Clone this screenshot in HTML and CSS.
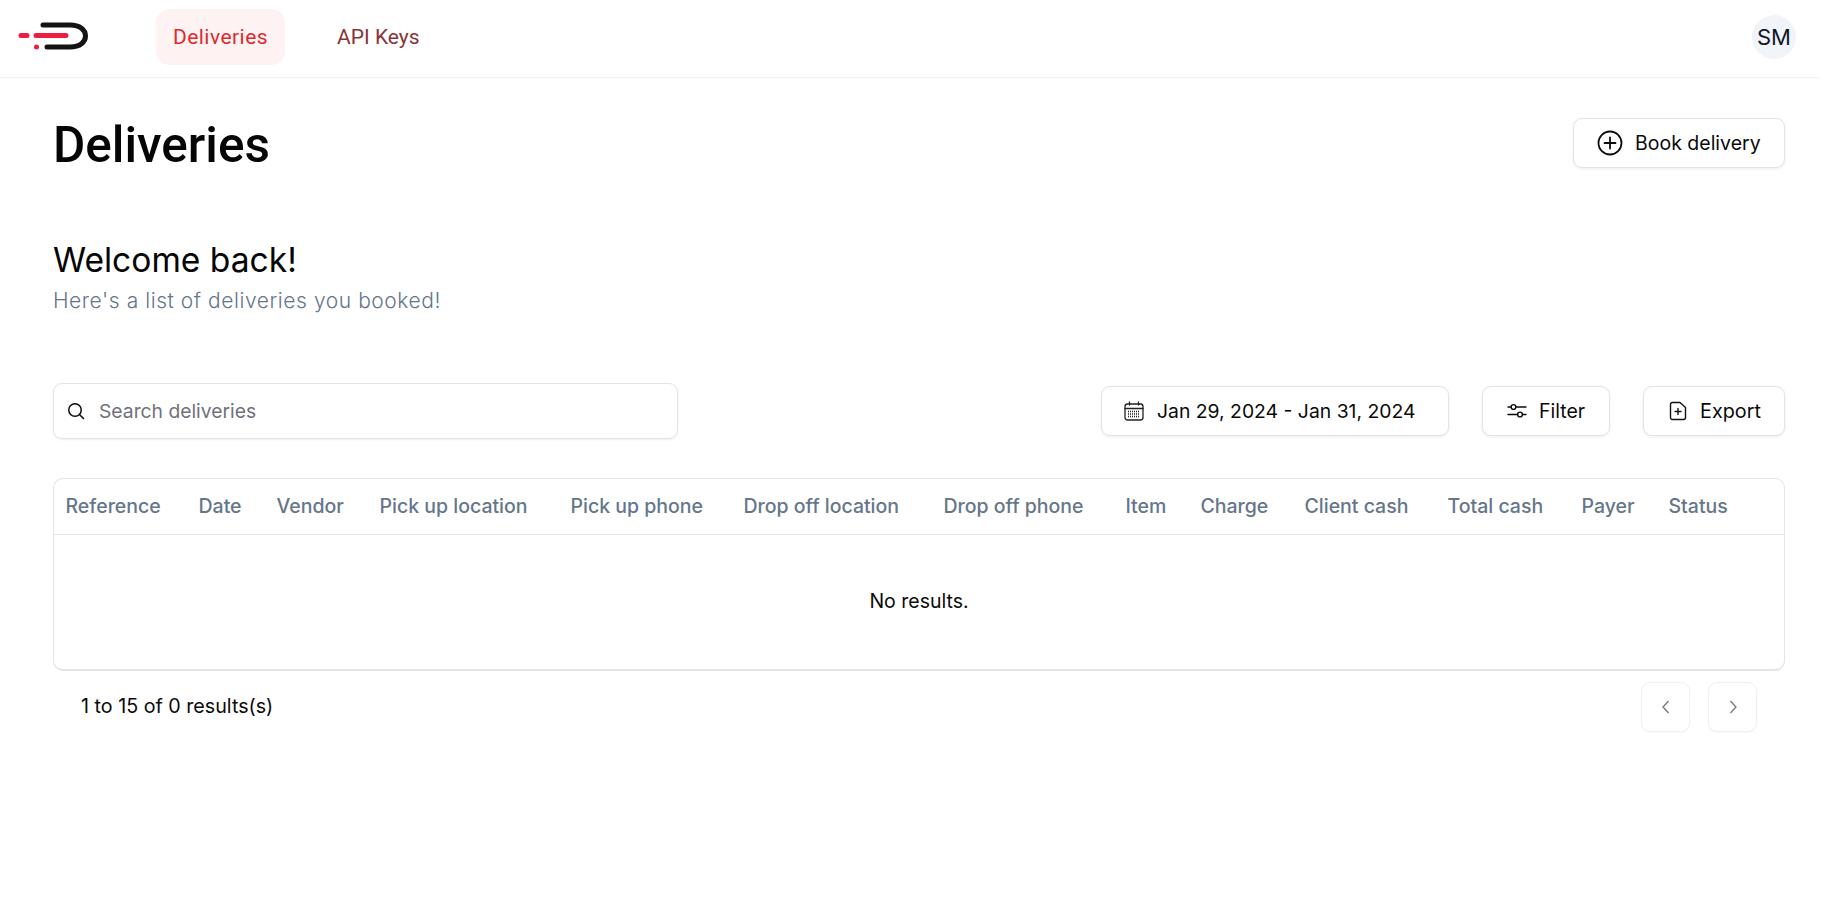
FILE: index.html
```html
<!DOCTYPE html>
<html lang="en">
<head>
<meta charset="utf-8">
<title>Deliveries</title>
<link rel="stylesheet" href="styles.css">
</head>
<body>
<div class="app">
  <header class="topbar">
    <svg class="logo" width="90" height="40" viewBox="0 0 90 40" fill="none" aria-label="Logo">
      <path d="M43 6H70C80 6 85.500 11 85.500 17C85.500 23 80 28 70 28H47" stroke="#141414" stroke-width="5" stroke-linecap="round"/>
      <path d="M21 16.500H27M36 16.500H66" stroke="#ee1c3e" stroke-width="5" stroke-linecap="round"/>
      <circle cx="36.500" cy="28" r="2.500" fill="#ee1c3e"/>
    </svg>
    <nav class="nav">
      <a class="nav-link active">Deliveries</a>
      <a class="nav-link">API Keys</a>
    </nav>
    <div class="avatar">SM</div>
  </header>

  <main class="main">
    <div class="title-row">
      <h1 class="title">Deliveries</h1>
      <button class="btn book">
        <svg width="26" height="26" viewBox="0 0 26 26" fill="none" stroke="#0b0b0b" stroke-width="1.800" stroke-linecap="round"><circle cx="13" cy="13" r="11.500"/><path d="M13 7.500V18.500M7.500 13H18.500"/></svg>
        Book delivery
      </button>
    </div>

    <section class="welcome">
      <h2 class="welcome-title">Welcome back!</h2>
      <p class="welcome-sub">Here's a list of deliveries you booked!</p>
    </section>

    <div class="toolbar">
      <label class="search">
        <svg width="18" height="18" viewBox="0 0 18 18" fill="none" stroke="#0b0b0b" stroke-width="1.500" stroke-linecap="round"><circle cx="8" cy="8" r="6.250"/><path d="M12.700 12.700L16.500 16.500"/></svg>
        <input class="search-input" type="text" placeholder="Search deliveries">
      </label>
      <div class="actions">
        <button class="btn date">
          <svg width="20" height="20" viewBox="0 0 20 20" fill="none" stroke="#222" stroke-width="1.300" stroke-linecap="round"><rect x="1" y="3" width="18" height="16" rx="2.500"/><path d="M1 7.500H19M5.500 1V4M14.500 1V4"/><path d="M4 10.500H16M4 13H16M4 15.500H16" stroke-dasharray="1 1" stroke-linecap="butt"/></svg>
          Jan 29, 2024 - Jan 31, 2024
        </button>
        <button class="btn filter">
          <svg width="20" height="20" viewBox="0 0 20 20" fill="none" stroke="#0b0b0b" stroke-width="1.400" stroke-linecap="round"><circle cx="6.500" cy="6" r="2.400"/><circle cx="13" cy="13.500" r="2.400"/><path d="M1 6H4M9 6H19M1 13.500H10.500M15.500 13.500H19"/></svg>
          Filter
        </button>
        <button class="btn export">
          <svg width="18" height="20" viewBox="0 0 18 20" fill="none" stroke="#111" stroke-width="1.400" stroke-linecap="round" stroke-linejoin="round"><path d="M3.500 1.500H11L16.500 6.500V16.500C16.500 17.600 15.600 18.500 14.500 18.500H3.500C2.400 18.500 1.500 17.600 1.500 16.500V3.500C1.500 2.400 2.400 1.500 3.500 1.500Z"/><path d="M9 7.500V13.500M6 10.500H12"/></svg>
          Export
        </button>
      </div>
    </div>

    <div class="table-card">
      <table class="table">
        <thead>
          <tr>
            <th class="c-ref">Reference</th>
            <th class="c-date">Date</th>
            <th class="c-vendor">Vendor</th>
            <th class="c-pul">Pick up location</th>
            <th class="c-pup">Pick up phone</th>
            <th class="c-dol">Drop off location</th>
            <th class="c-dop">Drop off phone</th>
            <th class="c-item">Item</th>
            <th class="c-charge">Charge</th>
            <th class="c-client">Client cash</th>
            <th class="c-total">Total cash</th>
            <th class="c-payer">Payer</th>
            <th class="c-status">Status</th>
          </tr>
        </thead>
        <tbody>
          <tr><td class="empty" colspan="13">No results.</td></tr>
        </tbody>
      </table>
    </div>

    <div class="pager">
      <span class="pager-text">1 to 15 of 0 results(s)</span>
      <div class="pager-btns">
        <button class="page-btn"><svg width="10" height="14" viewBox="0 0 10 14" fill="none" stroke="#777" stroke-width="1.300"><path d="M7.500 1L2 7L7.500 13"/></svg></button>
        <button class="page-btn"><svg width="10" height="14" viewBox="0 0 10 14" fill="none" stroke="#777" stroke-width="1.300"><path d="M2.500 1L8 7L2.500 13"/></svg></button>
      </div>
    </div>
  </main>
</div>
</body>
</html>
```
FILE: styles.css
```css
* { box-sizing: border-box; }
html, body { margin: 0; height: 100%; background: #fff; }
body {
  font-family: Inter, "Liberation Sans", sans-serif;
  color: #0a0a0a;
  overflow: hidden;
}
.app { width: 1819px; }

.topbar {
  height: 78px;
  display: flex;
  align-items: center;
  border-bottom: 1px solid #f1f1f3;
  padding: 0 23px 0 0;
}
.logo { margin-left: 0; margin-top: 1px; flex: none; }
.nav { display: flex; align-items: center; gap: 35px; margin-left: 66px; margin-top: -3px; }
.nav-link {
  font-family: Roboto, sans-serif;
  font-size: 21px;
  line-height: 56px;
  height: 56px;
  padding: 0 17px;
  border-radius: 14px;
  color: #8a3338;
}
.nav-link.active { background: #fef2f2; color: #dc2a2f; letter-spacing: .45px; }
.avatar {
  margin-left: auto;
  margin-top: -3px;
  width: 44px;
  height: 44px;
  border-radius: 50%;
  background: #f1f5f9;
  color: #0f172a;
  font-size: 22px;
  display: flex;
  align-items: center;
  justify-content: center;
}

.main { padding: 0 34px 0 53px; }

.title-row {
  display: flex;
  justify-content: space-between;
  align-items: flex-start;
  padding-top: 40px;
}
.title {
  margin: -5px 0 0;
  font-family: Roboto, sans-serif;
  font-weight: 500;
  font-size: 49.500px;
  line-height: 64px;
  color: #050505;
}
.btn {
  display: inline-flex;
  align-items: center;
  height: 50px;
  background: #fff;
  border: 1px solid #e4e4e7;
  border-radius: 9px;
  box-shadow: 0 1px 3px rgba(0, 0, 0, .08);
  font-family: inherit;
  font-size: 19.500px;
  font-weight: 400;
  color: #0a0a0a;
  padding: 0;
  white-space: nowrap;
}
.book { width: 212px; padding-left: 23px; gap: 12px; }

.welcome { margin-top: 63px; }
.welcome-title {
  margin: 0;
  font-size: 33.600px;
  font-weight: 400;
  line-height: 40px;
  color: #050505;
}
.welcome-sub {
  margin: 5px 0 0;
  font-size: 21px;
  font-weight: 300;
  line-height: 32px;
  color: #64748b;
  letter-spacing: .56px;
}

.toolbar {
  margin-top: 66px;
  display: flex;
  justify-content: space-between;
  align-items: center;
}
.search {
  width: 625px;
  height: 56px;
  display: flex;
  align-items: center;
  gap: 14px;
  padding-left: 13px;
  border: 1px solid #e4e4e7;
  border-radius: 9px;
  box-shadow: 0 1px 2px rgba(0, 0, 0, .07);
}
.search-input {
  flex: 1;
  border: 0;
  outline: 0;
  padding: 0;
  background: none;
  font-family: inherit;
  font-size: 19.300px;
  color: #0a0a0a;
}
.search-input::placeholder { color: #71717a; opacity: 1; }
.actions { display: flex; gap: 33px; }
.date { width: 348px; padding-left: 22px; gap: 13px; font-size: 19.350px; }
.filter { width: 128px; padding-left: 24px; gap: 12px; }
.export { width: 142px; padding-left: 25px; gap: 13px; font-size: 19.800px; }

.table-card {
  margin-top: 39px;
  height: 193px;
  border: 1px solid #e4e4e7;
  border-radius: 10px;
  border-bottom-width: 2px;
}
.table {
  width: 100%;
  border-collapse: collapse;
  table-layout: fixed;
}
.table th {
  height: 55px;
  padding: 0 0 0 11.500px;
  text-align: left;
  font-size: 19.500px;
  font-weight: 450;
  color: #667689;
  border-bottom: 1px solid #e4e4e7;
  white-space: nowrap;
}
.c-ref { width: 133px; }
.c-date { width: 78px; }
.c-vendor { width: 103px; }
.c-pul { width: 191px; }
.c-pup { width: 173px; }
.c-dol { width: 200px; }
.c-dop { width: 182px; }
.c-item { width: 75px; }
.c-charge { width: 104px; }
.c-client { width: 143px; }
.c-total { width: 134px; }
.c-payer { width: 87px; }
.table .empty {
  height: 134px;
  padding: 0;
  text-align: center;
  font-size: 19.500px;
  color: #0a0a0a;
}

.pager {
  display: flex;
  justify-content: space-between;
  align-items: center;
  padding: 11px 28px 0;
}
.pager-text { font-size: 19.700px; margin-top: -2px; }
.pager-btns { display: flex; gap: 18px; }
.page-btn {
  width: 49px;
  height: 50px;
  display: flex;
  align-items: center;
  justify-content: center;
  padding: 0;
  background: #fff;
  border: 1px solid #f0f0f2;
  border-radius: 9px;
  box-shadow: 0 1px 2px rgba(0, 0, 0, .04);
}
```
